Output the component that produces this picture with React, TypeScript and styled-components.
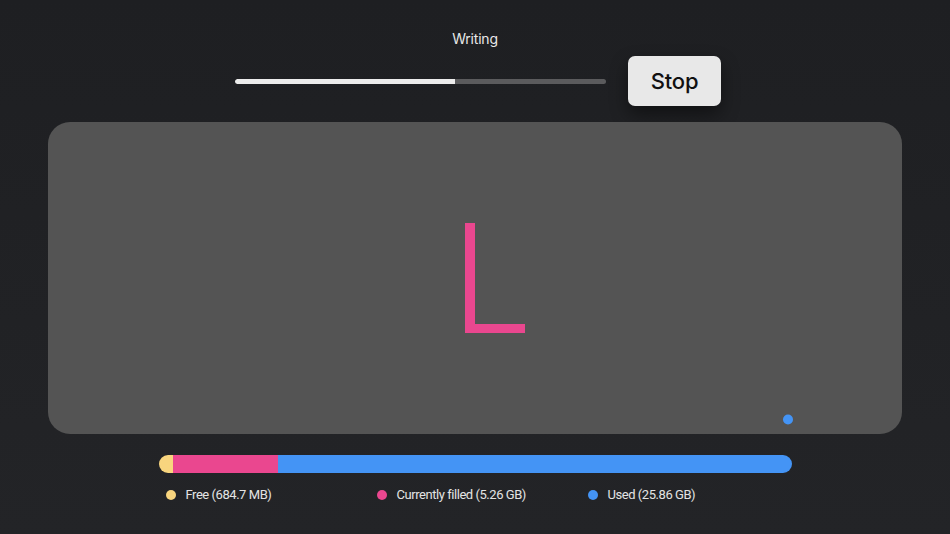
import React from "react";
import styled, { createGlobalStyle } from "styled-components";

const Global = createGlobalStyle`
  html, body { margin: 0; padding: 0; }
  body {
    width: 950px;
    height: 534px;
    overflow: hidden;
    background: linear-gradient(180deg, #1e1f22 0%, #212225 60%, #232427 100%);
    font-family: Inter, "Noto Sans", "Liberation Sans", sans-serif;
    color: #e6e6e6;
  }
`;

const Page = styled.div`
  width: 950px;
  height: 534px;
  display: flex;
  flex-direction: column;
  align-items: center;
  padding-top: 30px;
  box-sizing: border-box;
`;

const Title = styled.div`
  font-size: 14px;
  line-height: 18px;
  color: #e8e8e8;
  letter-spacing: -0.2px;
`;

const ControlRow = styled.div`
  display: flex;
  align-items: center;
  gap: 22px;
  margin-top: 8px;
  padding-left: 6px;
`;

const Track = styled.div`
  width: 371px;
  height: 5px;
  border-radius: 3px;
  background: #5b5b5d;
  overflow: hidden;
  display: flex;
`;

const Fill = styled.div`
  height: 100%;
  background: #ececec;
  border-radius: 3px 0 0 3px;
`;

const StopButton = styled.button`
  width: 93px;
  height: 50px;
  border: none;
  border-radius: 7px;
  background: #e8e8e8;
  color: #111;
  font-family: Inter, "Noto Sans", "Liberation Sans", sans-serif;
  font-size: 22px;
  font-weight: 500;
  letter-spacing: -0.2px;
  box-shadow: 0 8px 18px rgba(0, 0, 0, 0.45);
  cursor: pointer;
`;

const Panel = styled.div`
  margin-top: 16px;
  width: 854px;
  height: 312px;
  border-radius: 22px;
  background: #545454;
  overflow: hidden;
`;

const CanvasSvg = styled.svg`
  display: block;
  width: 100%;
  height: 100%;
`;

const Storage = styled.div`
  margin-top: 21px;
  width: 633px;
  display: flex;
  flex-direction: column;
  gap: 14px;
`;

const Bar = styled.div`
  height: 18px;
  border-radius: 9px;
  overflow: hidden;
  display: flex;
`;

const Segment = styled.div<{ $color: string }>`
  height: 100%;
  background: ${(p) => p.$color};
`;

const Legend = styled.div`
  display: grid;
  grid-template-columns: repeat(3, 1fr);
`;

const LegendItem = styled.div`
  display: flex;
  align-items: center;
  gap: 10px;
  padding-left: 7px;
  font-family: Roboto, "Liberation Sans", sans-serif;
  font-size: 13px;
  letter-spacing: -0.45px;
  line-height: 16px;
  color: #e4e4e4;
`;

const Dot = styled.span<{ $color: string }>`
  width: 10px;
  height: 10px;
  border-radius: 50%;
  background: ${(p) => p.$color};
  flex: none;
`;

const YELLOW = "#f8d57e";
const PINK = "#ea478f";
const BLUE = "#4494f5";

const segments = [
  { label: "Free (684.7 MB)", color: YELLOW, width: 14 },
  { label: "Currently filled (5.26 GB)", color: PINK, width: 105 },
  { label: "Used (25.86 GB)", color: BLUE, width: 514 },
];

export default function App() {
  const progress = 0.593;
  return (
    <>
      <Global />
      <Page>
        <Title>Writing</Title>
        <ControlRow>
          <Track>
            <Fill style={{ width: `${progress * 100}%` }} />
          </Track>
          <StopButton>Stop</StopButton>
        </ControlRow>
        <Panel>
          <CanvasSvg viewBox="0 0 854 312">
            <rect x="417" y="101" width="10" height="110" fill={PINK} />
            <rect x="417" y="202" width="60" height="9" fill={PINK} />
            <circle cx="740" cy="297.5" r="5" fill={BLUE} />
          </CanvasSvg>
        </Panel>
        <Storage>
          <Bar>
            {segments.map((s) => (
              <Segment key={s.label} $color={s.color} style={{ width: s.width }} />
            ))}
          </Bar>
          <Legend>
            {segments.map((s) => (
              <LegendItem key={s.label}>
                <Dot $color={s.color} />
                {s.label}
              </LegendItem>
            ))}
          </Legend>
        </Storage>
      </Page>
    </>
  );
}
